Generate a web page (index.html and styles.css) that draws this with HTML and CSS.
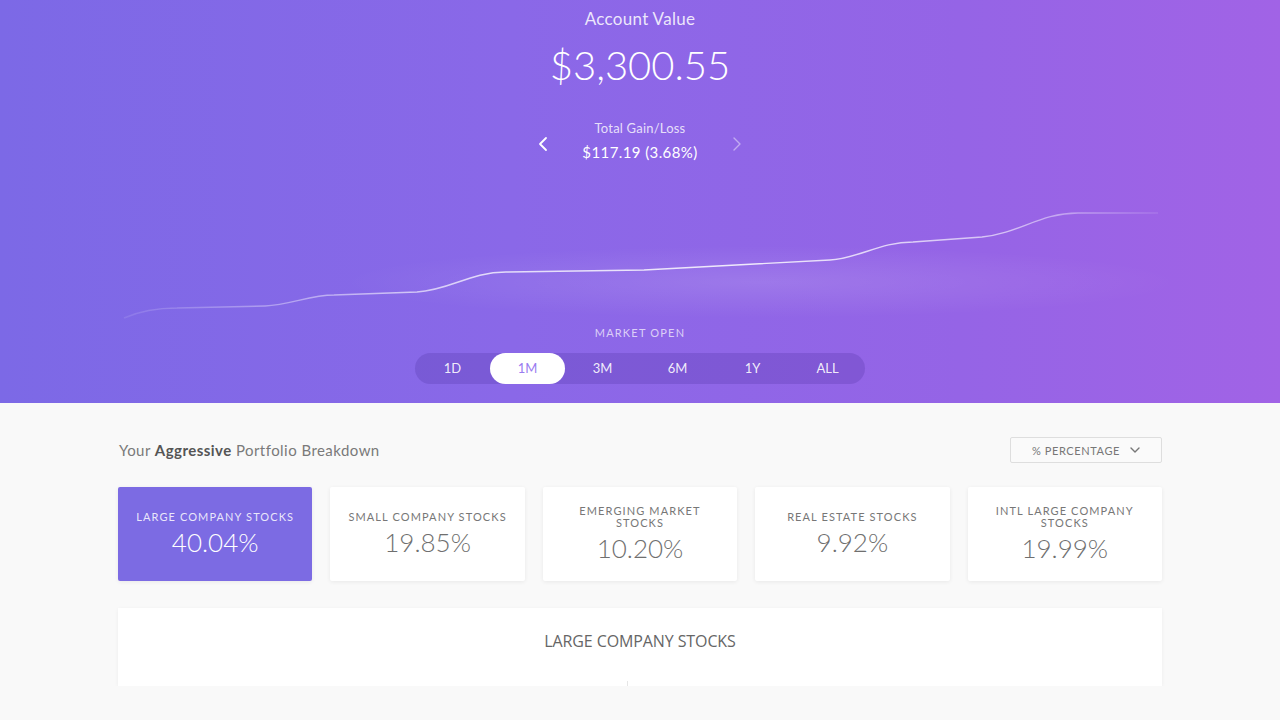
FILE: index.html
```html
<!DOCTYPE html>
<html lang="en">
<head>
    <meta charset="UTF-8">
    <meta name="viewport" content="width=device-width, initial-scale=1.0">
    <title>Account Value</title>
    <link rel="stylesheet" href="styles.css">
</head>
<body>
    <header class="hero">
        <div class="hero-label">Account Value</div>
        <div class="hero-value">$3,300.55</div>

        <div class="gain">
            <svg class="chev" width="10" height="16" viewBox="0 0 10 16"><path d="M8 2 L2 8 L8 14" fill="none" stroke="#fff" stroke-width="1.8" stroke-linecap="round" stroke-linejoin="round"/></svg>
            <div class="gain-text">
                <div class="gain-label">Total Gain/Loss</div>
                <div class="gain-value">$117.19 (3.68%)</div>
            </div>
            <svg class="chev dim" width="10" height="16" viewBox="0 0 10 16"><path d="M2 2 L8 8 L2 14" fill="none" stroke="#fff" stroke-width="1.4" stroke-linecap="round" stroke-linejoin="round"/></svg>
        </div>

        <svg class="chart" width="1280" height="164" viewBox="0 162 1280 164">
            <defs>
                <linearGradient id="lineFade" x1="124" y1="0" x2="1160" y2="0" gradientUnits="userSpaceOnUse">
                    <stop offset="0" stop-color="#fff" stop-opacity="0.1"/>
                    <stop offset="0.35" stop-color="#fff" stop-opacity="0.75"/>
                    <stop offset="0.6" stop-color="#fff" stop-opacity="0.85"/>
                    <stop offset="0.85" stop-color="#fff" stop-opacity="0.6"/>
                    <stop offset="1" stop-color="#fff" stop-opacity="0.1"/>
                </linearGradient>
                <radialGradient id="glow" cx="0.5" cy="0.5" r="0.5">
                    <stop offset="0" stop-color="#fff" stop-opacity="0.12"/>
                    <stop offset="1" stop-color="#fff" stop-opacity="0"/>
                </radialGradient>
            </defs>
            <ellipse cx="760" cy="282" rx="420" ry="36" fill="url(#glow)"/>
            <path d="M124,318 C140,311 160,308 177,308 L265,306 C290,305 310,295 334,295 L417,292 C450,290 470,272 506,272 L644,270 L830,260 C860,258 880,242 913,242 L982,237 C1020,233 1040,213 1078,213 L1158,213"
                  fill="none" stroke="url(#lineFade)" stroke-width="1.4"/>
        </svg>

        <div class="market">MARKET OPEN</div>

        <div class="ranges">
            <span class="range">1D</span>
            <span class="range active">1M</span>
            <span class="range">3M</span>
            <span class="range">6M</span>
            <span class="range">1Y</span>
            <span class="range">ALL</span>
        </div>
    </header>

    <main class="content">
        <div class="breakdown-head">
            <div class="breakdown-title">Your <b>Aggressive</b> Portfolio Breakdown</div>
            <div class="dropdown">
                % PERCENTAGE
                <svg width="10" height="6" viewBox="0 0 10 6"><path d="M1 1 L5 5 L9 1" fill="none" stroke="#777" stroke-width="1.4" stroke-linecap="round" stroke-linejoin="round"/></svg>
            </div>
        </div>

        <div class="cards">
            <div class="card selected">
                <div class="card-label">LARGE COMPANY STOCKS</div>
                <div class="card-value">40.04%</div>
            </div>
            <div class="card">
                <div class="card-label">SMALL COMPANY STOCKS</div>
                <div class="card-value">19.85%</div>
            </div>
            <div class="card">
                <div class="card-label">EMERGING MARKET<br>STOCKS</div>
                <div class="card-value">10.20%</div>
            </div>
            <div class="card">
                <div class="card-label">REAL ESTATE STOCKS</div>
                <div class="card-value">9.92%</div>
            </div>
            <div class="card">
                <div class="card-label">INTL LARGE COMPANY<br>STOCKS</div>
                <div class="card-value">19.99%</div>
            </div>
        </div>

        <div class="detail">
            <div class="detail-title">LARGE COMPANY STOCKS</div>
            <div class="detail-tick"></div>
        </div>
    </main>
</body>
</html>
```

FILE: styles.css
```css
body {
    margin: 0;
    background-color: #f9f9f9;
    font-family: 'Lato', 'Noto Sans', sans-serif;
    overflow: hidden;
}

.hero {
    height: 403px;
    box-sizing: border-box;
    padding-top: 8px;
    text-align: center;
    color: white;
    background: linear-gradient(90deg, #7c69e6 0%, #8a68e8 40%, #9564e6 75%, #a163e6 100%);
    overflow: hidden;
}

.hero-label {
    font-size: 17px;
    line-height: 22px;
    letter-spacing: 0.3px;
    color: rgba(255, 255, 255, 0.85);
}

.hero-value {
    margin-top: 11px;
    font-size: 40px;
    line-height: 48px;
    font-weight: 300;
}

.gain {
    margin-top: 30px;
    display: flex;
    justify-content: center;
    align-items: center;
    gap: 34px;
}

.gain-text {
    width: 116px;
}

.gain-label {
    font-size: 13px;
    line-height: 18px;
    letter-spacing: 0.2px;
    color: rgba(255, 255, 255, 0.8);
}

.gain-value {
    margin-top: 5px;
    font-size: 15px;
    line-height: 20px;
    letter-spacing: 0.4px;
    white-space: nowrap;
}

.chev {
    margin-top: 6px;
}

.chev.dim {
    opacity: 0.45;
}

.chart {
    display: block;
}

.market {
    font-size: 11px;
    line-height: 14px;
    letter-spacing: 1.2px;
    color: rgba(255, 255, 255, 0.7);
}

.ranges {
    width: 450px;
    height: 31px;
    margin: 13px auto 0;
    display: flex;
    border-radius: 16px;
    background-color: rgba(70, 40, 150, 0.22);
}

.range {
    width: 75px;
    line-height: 31px;
    font-size: 13px;
    border-radius: 16px;
    color: rgba(255, 255, 255, 0.9);
}

.range.active {
    background-color: white;
    color: #9a7cf0;
}

.content {
    width: 1044px;
    margin: 0 auto;
    padding-top: 34px;
}

.breakdown-head {
    display: flex;
    justify-content: space-between;
    align-items: center;
}

.breakdown-title {
    padding-left: 1px;
    font-size: 15px;
    letter-spacing: 0.45px;
    color: #7a7a7a;
}

.breakdown-title b {
    color: #555;
    font-weight: 700;
}

.dropdown {
    width: 152px;
    height: 26px;
    box-sizing: border-box;
    border: 1px solid #dedede;
    border-radius: 2px;
    background-color: #fafafa;
    display: flex;
    justify-content: center;
    align-items: center;
    gap: 10px;
    font-size: 11px;
    letter-spacing: 0.6px;
    color: #777;
}

.cards {
    margin-top: 24px;
    display: grid;
    grid-template-columns: repeat(5, 1fr);
    gap: 18px;
}

.card {
    height: 94px;
    background-color: white;
    border-radius: 2px;
    box-shadow: 0 1px 4px rgba(0, 0, 0, 0.07);
    display: flex;
    flex-direction: column;
    justify-content: center;
    align-items: center;
    text-align: center;
    color: #777;
}

.card-label {
    font-size: 11px;
    line-height: 12px;
    letter-spacing: 1.1px;
}

.card-value {
    margin-top: 3px;
    font-size: 26px;
    line-height: 32px;
    font-weight: 300;
    color: #6f6f6f;
}

.card.selected {
    background-color: #7c6be3;
    color: rgba(255, 255, 255, 0.85);
}

.card.selected .card-value {
    color: white;
}

.detail {
    margin-top: 27px;
    height: 78px;
    box-sizing: border-box;
    padding-top: 23px;
    background-color: white;
    box-shadow: 0 1px 4px rgba(0, 0, 0, 0.05);
    text-align: center;
    position: relative;
}

.detail-title {
    font-family: 'Open Sans', sans-serif;
    font-size: 16px;
    line-height: 20px;
    letter-spacing: -0.1px;
    color: #666;
}

.detail-tick {
    position: absolute;
    left: 509px;
    bottom: 0;
    width: 1px;
    height: 5px;
    background-color: #e6e6e6;
}
```
